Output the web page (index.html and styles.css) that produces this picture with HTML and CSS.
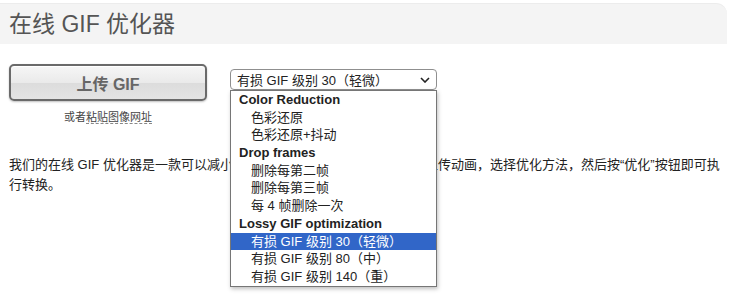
FILE: index.html
```html
<!DOCTYPE html>
<html lang="zh-CN">
<head>
	<meta charset="UTF-8">
	<title>在线 GIF 优化器</title>
	<link rel="stylesheet" href="styles.css">
</head>
<body>
	<h1 class="title">在线 GIF 优化器</h1>

	<div class="tools">
		<div class="upload">
			<button class="button-upload">上传 GIF</button>
			<div class="paste">或者<span class="paste-link">粘贴图像网址</span></div>
		</div>

		<div class="picker">
			<div class="select">
				<span>有损 GIF 级别 30（轻微）</span>
				<svg class="chevron" width="10" height="6" viewBox="0 0 10 6"><path d="M1 1 L5 5 L9 1" fill="none" stroke="#222" stroke-width="1.6"/></svg>
			</div>
			<ul class="options">
				<li class="group">Color Reduction</li>
				<li>色彩还原</li>
				<li>色彩还原+抖动</li>
				<li class="group">Drop frames</li>
				<li>删除每第二帧</li>
				<li>删除每第三帧</li>
				<li>每 4 帧删除一次</li>
				<li class="group">Lossy GIF optimization</li>
				<li class="selected">有损 GIF 级别 30（轻微）</li>
				<li>有损 GIF 级别 80（中）</li>
				<li>有损 GIF 级别 140（重）</li>
			</ul>
		</div>
	</div>

	<p class="intro">我们的在线 GIF 优化器是一款可以减小 GIF 文件大小的简单工具。&nbsp;&nbsp;只需上传动画，选择优化方法，然后按“优化”按钮即可执行转换。</p>
</body>
</html>
```

FILE: styles.css
```css
html {
	height: 100%;
}

body {
	margin: 0;
	min-height: 100%;
	padding: 3px 14px 0 0;
	box-sizing: border-box;
	font-family: Arial, "Liberation Sans", "Noto Sans CJK SC", sans-serif;
	color: #222;
}

.title {
	margin: 0;
	height: 41px;
	padding-left: 9px;
	background-color: #f4f4f4;
	border-top: 1px solid #ececec;
	border-top-right-radius: 11px;
	font-size: 23px;
	font-weight: normal;
	line-height: 40px;
	color: #555;
	box-sizing: border-box;
}

.tools {
	display: flex;
	gap: 23px;
	padding: 20px 0 0 9px;
}

.upload {
	width: 198px;
	text-align: center;
}

.button-upload {
	display: block;
	width: 198px;
	height: 37px;
	border: 2px solid #6a6a6a;
	border-radius: 5px;
	background: linear-gradient(#f6f6f6, #eaeaea 50%, #dcdcdc 51%, #e4e4e4);
	box-shadow: inset 0 1px 0 #fff, 0 1px 2px rgba(0, 0, 0, 0.25);
	font-family: inherit;
	font-size: 16px;
	font-weight: bold;
	color: #666;
}

.paste {
	margin-top: 7px;
	font-size: 11px;
	color: #444;
}

.paste-link {
	border-bottom: 1px dashed #888;
}

.picker {
	position: relative;
	width: 207px;
	padding-top: 5px;
}

.select {
	display: flex;
	align-items: center;
	justify-content: space-between;
	height: 21px;
	padding: 0 6px 0 6px;
	border: 1px solid #8f8f8f;
	border-radius: 4px;
	background-color: #fff;
	font-size: 13px;
	box-sizing: border-box;
}

.options {
	position: absolute;
	top: 26px;
	left: 0;
	z-index: 2;
	width: 207px;
	margin: 0;
	padding: 0;
	list-style: none;
	background-color: #fff;
	border: 1px solid #767676;
	box-shadow: 1px 2px 4px rgba(0, 0, 0, 0.25);
	box-sizing: border-box;
	font-size: 13px;
}

.options li {
	height: 17.7px;
	line-height: 17.7px;
	padding-left: 20px;
	color: #222;
	white-space: nowrap;
}

.options .group {
	padding-left: 8px;
	font-weight: bold;
}

.options .selected {
	background-color: #3166c8;
	color: #fff;
}

.intro {
	margin: 31px 5px 0 9px;
	font-size: 13px;
	line-height: 20px;
}
```
